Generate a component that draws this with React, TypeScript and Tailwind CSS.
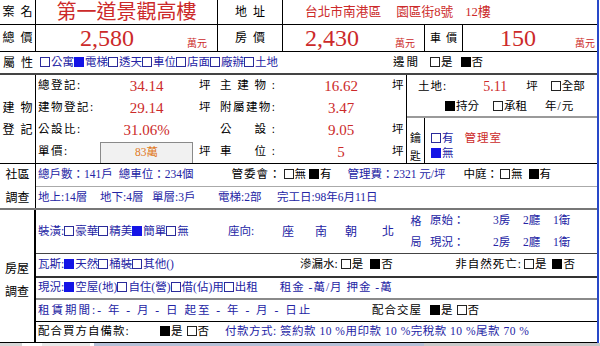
import type { ReactNode } from 'react';

type BoxKind = 'blank' | 'blue' | 'black' | 'blankDark';

function Box({ kind }: { kind: BoxKind }) {
  const tone =
    kind === 'blue'
      ? 'bg-[#1414e6] border-[#1414e6]'
      : kind === 'black'
        ? 'bg-black border-black'
        : kind === 'blankDark'
          ? 'bg-white border-[#222]'
          : 'bg-white border-[#2a2a9a]';
  return <span className={`inline-block w-[10px] h-[10px] border ${tone} align-[-1px] mr-[1px]`} />;
}

// label with characters pushed apart, as the sheet does with padded cells
function Spread({ text, className }: { text: string; className: string }) {
  return (
    <div className={`flex justify-between ${className}`}>
      {text.split('').map((c, i) => (
        <span key={i}>{c}</span>
      ))}
    </div>
  );
}

function Side({ children, className = '' }: { children: ReactNode; className?: string }) {
  return (
    <div className={`w-[36px] shrink-0 flex flex-col items-center justify-center text-[12px] gap-[10px] ${className}`}>
      {children}
    </div>
  );
}

const red = 'text-[#cc2a2a]';
const blue = 'text-[#2424a4]';

export default function App() {
  return (
    <div className="w-[600px] h-[346px] overflow-hidden bg-white text-black font-['Liberation_Serif','Noto_Sans_CJK_TC',serif] text-[11.5px] leading-none">
      <div className="w-[599px] border-r-2 border-[#2848c8]">
        {/* 案名 / 地址 */}
        <div className="flex h-[25px] border-b border-black">
          <div className="w-[36px] shrink-0 border-r border-black flex items-center justify-center gap-[6px] text-[12px]">
            <span>案</span>
            <span>名</span>
          </div>
          <div className={`w-[182px] shrink-0 border-r border-black flex items-center justify-center text-[20px] ${red}`}>
            第一道景觀高樓
          </div>
          <div className="w-[65px] shrink-0 border-r border-black flex items-center justify-center gap-[6px] text-[12px]">
            <span>地</span>
            <span>址</span>
          </div>
          <div className={`flex-1 flex items-center pl-[22px] text-[12.7px] ${red}`}>
            <span>台北市南港區</span>
            <span className="ml-[15px]">園區街8號</span>
            <span className="ml-[12px]">12樓</span>
          </div>
        </div>

        {/* 價格 */}
        <div className="flex h-[27px] border-b border-black">
          <div className="w-[36px] shrink-0 border-r border-black flex items-center justify-center gap-[6px] text-[12px]">
            <span>總</span>
            <span>價</span>
          </div>
          <div className={`w-[182px] shrink-0 border-r border-black flex items-end ${red}`}>
            <span className="self-center text-[24px] ml-[44px]">2,580</span>
            <span className="ml-auto mr-[10px] mb-[2px] text-[10px]">萬元</span>
          </div>
          <div className="w-[65px] shrink-0 border-r border-black flex items-center justify-center gap-[6px] text-[12px]">
            <span>房</span>
            <span>價</span>
          </div>
          <div className={`w-[142px] shrink-0 border-r border-black flex items-end ${red}`}>
            <span className="self-center text-[24px] ml-[22px]">2,430</span>
            <span className="ml-auto mr-[9px] mb-[2px] text-[10px]">萬元</span>
          </div>
          <div className="w-[38px] shrink-0 border-r border-black flex items-center justify-center gap-[5px] text-[11px]">
            <span>車</span>
            <span>價</span>
          </div>
          <div className={`flex-1 flex items-end ${red}`}>
            <span className="self-center text-[24px] ml-[37px]">150</span>
            <span className="ml-auto mr-[2px] mb-[2px] text-[10px]">萬元</span>
          </div>
        </div>

        {/* 屬性 */}
        <div className="flex h-[23px] items-center border-b-2 border-[#444]">
          <div className="w-[36px] shrink-0 flex justify-center gap-[6px] text-[12px]">
            <span>屬</span>
            <span>性</span>
          </div>
          <div className={`w-[357px] shrink-0 pl-[4px] ${blue}`}>
            <Box kind="blank" />公寓<Box kind="blue" />電梯<Box kind="blank" />透天<Box kind="blank" />車位
            <Box kind="blank" />店面<Box kind="blank" />廠辦<Box kind="blank" />土地
          </div>
          <div className="flex items-center">
            <span className="tracking-[2px]">邊間</span>
            <span className="ml-[10px]">
              <Box kind="blankDark" />是
            </span>
            <span className="ml-[8px]">
              <Box kind="black" />否
            </span>
          </div>
        </div>

        {/* 建物登記 */}
        <div className="flex h-[89px] border-b border-black">
          <Side className="border-r border-black">
            <div className="flex gap-[6px]">
              <span>建</span>
              <span>物</span>
            </div>
            <div className="flex gap-[6px]">
              <span>登</span>
              <span>記</span>
            </div>
          </Side>
          <div className="w-[371px] shrink-0 border-r border-black flex flex-col">
            {[
              ['總登記:', '34.14', '坪', '主建物:', '16.62', '坪'],
              ['建物登記:', '29.14', '坪', '附屬建物:', '3.47', ''],
              ['公設比:', '31.06%', '', '公　設:', '9.05', '坪'],
            ].map((r) => (
              <div key={r[0]} className="flex h-[22px] items-center">
                <div className="w-[64px] shrink-0 pl-[2px] tracking-[1.5px]">{r[0]}</div>
                <div className={`w-[93px] shrink-0 text-center text-[15px] ${red}`}>{r[1]}</div>
                <div className="w-[27px] shrink-0 pl-[6px]">{r[2]}</div>
                <Spread text={r[3]} className="w-[55px] shrink-0" />
                <div className={`w-[117px] shrink-0 pl-[15px] text-center text-[15px] ${red}`}>{r[4]}</div>
                <div className="w-[15px] shrink-0">{r[5]}</div>
              </div>
            ))}
            <div className="flex flex-1 items-center">
              <div className="w-[64px] shrink-0 pl-[2px] tracking-[1.5px]">單價:</div>
              <div className="w-[93px] shrink-0 self-stretch mt-[1px] bg-[#f1f1f1] border border-[#8a8a8a] border-b-0 flex items-center justify-center text-[11.5px] text-[#e07a1e]">
                83萬
              </div>
              <div className="w-[27px] shrink-0 pl-[6px]">坪</div>
              <Spread text="車　位:" className="w-[55px] shrink-0" />
              <div className={`w-[117px] shrink-0 pl-[15px] text-center text-[15px] ${red}`}>5</div>
              <div className="w-[15px] shrink-0">坪</div>
            </div>
          </div>
          <div className="flex-1 flex flex-col">
            <div className="h-[43px] border-b-2 border-[#9a9a9a] flex flex-col pt-[2px]">
              <div className="h-[20px] flex items-center">
                <span className="ml-[11px] tracking-[1px]">土地:</span>
                <span className={`ml-[36px] text-[14px] ${red}`}>5.11</span>
                <span className="ml-[19px]">坪</span>
                <span className="ml-[13px]">
                  <Box kind="blankDark" />全部
                </span>
              </div>
              <div className="h-[20px] flex items-center">
                <span className="ml-[38px]">
                  <Box kind="black" />持分
                </span>
                <span className="ml-[14px]">
                  <Box kind="blankDark" />承租
                </span>
                <span className="ml-[18px] tracking-[1px]">年/元</span>
              </div>
            </div>
            <div className="flex-1 flex">
              <div className="w-[18px] shrink-0 border-r border-black flex flex-col items-center justify-end gap-[7px] pb-[1px] text-[11px]">
                <span>鑰</span>
                <span>匙</span>
              </div>
              <div className="flex-1 flex flex-col pl-[6px] pt-[13px]">
                <div className={`h-[15px] flex items-center ${blue}`}>
                  <span>
                    <Box kind="blank" />有
                  </span>
                  <span className={`ml-[11px] tracking-[1px] ${red}`}>管理室</span>
                </div>
                <div className={`h-[15px] flex items-center ${blue}`}>
                  <span>
                    <Box kind="blue" />無
                  </span>
                </div>
              </div>
            </div>
          </div>
        </div>

        {/* 社區調查 */}
        <div className="flex h-[46px] border-b-2 border-[#777]">
          <Side className="border-r border-black gap-[11px]">
            <span>社區</span>
            <span>調查</span>
          </Side>
          <div className="flex-1 flex flex-col">
            <div className="h-[23px] border-b border-[#aaa] flex items-center">
              <span className={`ml-[2px] ${blue}`}>總戶數：141戶</span>
              <span className={`ml-[6px] ${blue}`}>總車位：234個</span>
              <span className="ml-[38px] tracking-[1px]">管委會：</span>
              <span className="ml-[2px]">
                <Box kind="blankDark" />無
              </span>
              <span className="ml-[3px]">
                <Box kind="black" />有
              </span>
              <span className={`ml-[16px] ${blue}`}>管理費：2321 元/坪</span>
              <span className="ml-[18px]">中庭：</span>
              <span className="ml-[2px]">
                <Box kind="blankDark" />無
              </span>
              <span className="ml-[6px]">
                <Box kind="black" />有
              </span>
            </div>
            <div className={`flex-1 flex items-center pl-[2px] ${blue}`}>
              <span className="w-[62px] shrink-0">地上:14層</span>
              <span className="w-[52px] shrink-0">地下:4層</span>
              <span className="w-[66px] shrink-0">單層:3戶</span>
              <span className="w-[59px] shrink-0">電梯:2部</span>
              <span>完工日:98年6月11日</span>
            </div>
          </div>
        </div>

        {/* 房屋調查 */}
        <div className="flex h-[133px] border-b border-black">
          <Side className="border-r-2 border-black gap-[11px] pt-[8px]">
            <span>房屋</span>
            <span>調查</span>
          </Side>
          <div className="flex-1 flex flex-col">
            <div className={`h-[44px] border-b border-[#444] flex items-center ${blue}`}>
              <span className="ml-[2px] w-[190px] shrink-0">
                裝潢:<Box kind="blank" />豪華<Box kind="blank" />精美<Box kind="blue" />簡單<Box kind="blank" />無
              </span>
              <span className="w-[54px] shrink-0">座向:</span>
              <span className="w-[33px] shrink-0 text-[12px]">座</span>
              <span className="w-[30px] shrink-0 text-[12px]">南</span>
              <span className="w-[37px] shrink-0 text-[12px]">朝</span>
              <span className="w-[25px] shrink-0 text-[12px]">北</span>
              <div className="w-[18px] shrink-0 flex flex-col items-center gap-[10px] text-[11px]">
                <span>格</span>
                <span>局</span>
              </div>
              <div className="ml-[5px] flex flex-col gap-[10px]">
                {[
                  ['原始：', '3房'],
                  ['現況：', '2房'],
                ].map((r) => (
                  <div key={r[0]} className="flex">
                    <span className="w-[63px] shrink-0">{r[0]}</span>
                    <span className="w-[30px] shrink-0">{r[1]}</span>
                    <span className="w-[30px] shrink-0">2廳</span>
                    <span>1衛</span>
                  </div>
                ))}
              </div>
            </div>
            <div className="h-[24px] border-b-2 border-[#333] flex items-center">
              <span className={`ml-[2px] w-[262px] shrink-0 ${blue}`}>
                瓦斯:<Box kind="blue" />天然<Box kind="blank" />桶裝<Box kind="blank" />其他()
              </span>
              <span>滲漏水:</span>
              <span className="ml-[3px]">
                <Box kind="blankDark" />是
              </span>
              <span className="ml-[7px] w-[85px] shrink-0">
                <Box kind="black" />否
              </span>
              <span className="tracking-[1px]">非自然死亡:</span>
              <span className="ml-[2px]">
                <Box kind="blankDark" />是
              </span>
              <span className="ml-[6px]">
                <Box kind="black" />否
              </span>
            </div>
            <div className={`h-[22px] border-b-2 border-[#8a8a8a] flex items-center ${blue}`}>
              <span className="ml-[2px]">
                現況:<Box kind="blue" />空屋(地)<Box kind="blank" />自住(營)<Box kind="blank" />借(佔)用<Box kind="blank" />出租
              </span>
              <span className="ml-[22px] tracking-[1px]">租金 -萬/月 押金 -萬</span>
            </div>
            <div className="h-[22px] border-b border-black flex items-center">
              <span className={`ml-[2px] w-[334px] shrink-0 tracking-[2px] ${blue}`}>
                租賃期間:- 年 - 月 - 日 起至 - 年 - 月 - 日止
              </span>
              <span className="tracking-[1px]">配合交屋</span>
              <span className="ml-[8px]">
                <Box kind="black" />是
              </span>
              <span className="ml-[4px]">
                <Box kind="blankDark" />否
              </span>
            </div>
            <div className="flex-1 flex items-center">
              <span className="ml-[2px] w-[122px] shrink-0 tracking-[1px]">配合買方自備款:</span>
              <span>
                <Box kind="black" />是
              </span>
              <span className="ml-[4px]">
                <Box kind="blankDark" />否
              </span>
              <span className={`ml-[16px] tracking-[0.5px] ${blue}`}>付款方式: 簽約款 10 %用印款 10 %完稅款 10 %尾款 70 %</span>
            </div>
          </div>
        </div>
      </div>

      {/* sheet tab strip */}
      <div className="flex h-[3px]">
        <div className="w-[22px] bg-[#d6d6d6]" />
        <div className="w-[20px] bg-white" />
        <div className="w-[48px] bg-[#e8e8e8]" />
        <div className="w-[4px] bg-white" />
        <div className="w-[330px] bg-[#b4bfd6]" />
        <div className="flex-1 bg-[#c8c8c8]" />
      </div>
    </div>
  );
}
